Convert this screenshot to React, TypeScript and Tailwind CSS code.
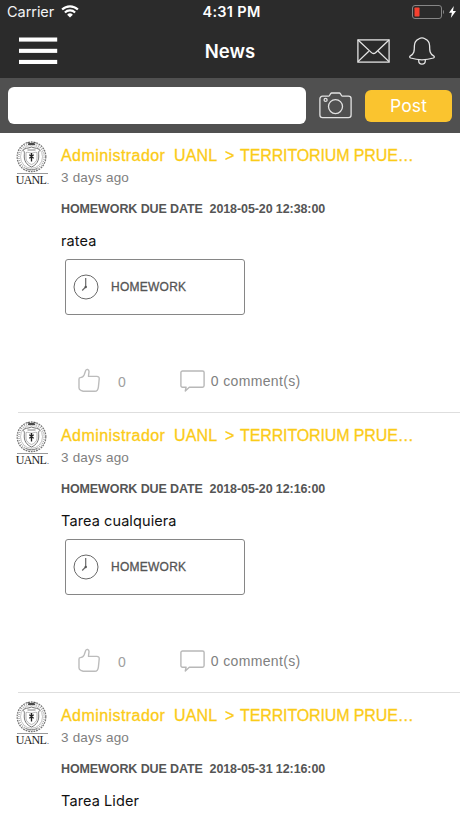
const posts = [
  { id: 1, due: '2018-05-20 12:38:00', body: 'ratea', hasTask: true },
  { id: 2, due: '2018-05-20 12:16:00', body: 'Tarea cualquiera', hasTask: true },
  { id: 3, due: '2018-05-31 12:16:00', body: 'Tarea Lider', hasTask: false },
];

function StatusBar() {
  return (
    <div className="flex h-[23px] items-center pl-[7px] pr-1 font-['Inter',sans-serif] text-white">
      <div className="flex flex-1 items-center gap-[7px]">
        <span className="text-[14.5px] tracking-[-0.05px] text-gray-100">Carrier</span>
        <svg width="18" height="13" viewBox="0 0 18 13" fill="none" stroke="#fff" strokeWidth="2.1">
          <path d="M1.1 4.6a11.2 11.2 0 0 1 15.8 0" />
          <path d="M3.9 7.5a7.2 7.2 0 0 1 10.2 0" />
          <path d="M9 12.6 6.1 9.7a4.1 4.1 0 0 1 5.8 0Z" fill="#fff" stroke="none" />
        </svg>
      </div>
      <span className="text-[14.5px] font-semibold tracking-[0.3px]">4:31 PM</span>
      <div className="flex flex-1 items-center justify-end gap-[4px]">
        <svg width="33" height="14" viewBox="0 0 33 14">
          <rect x="0.5" y="0.5" width="29" height="13" rx="2.5" fill="none" stroke="#868686" />
          <rect x="2.5" y="2.5" width="5" height="9" rx="0.8" fill="#f6402f" />
          <path d="M31 5c1.3.4 1.3 3.6 0 4Z" fill="#868686" />
        </svg>
        <svg width="7" height="12" viewBox="0 0 7 12" fill="#fff">
          <path d="M4.8 0 0 6.8h2.9L1.8 12 7 4.9H4Z" />
        </svg>
      </div>
    </div>
  );
}

function NavBar() {
  return (
    <div className="flex h-[55px] items-center justify-between pl-[19px] pr-[25px]">
      <svg width="77" height="28" viewBox="0 0 77 28" fill="#fff">
        <rect x="0" y="0.5" width="38.2" height="4.1" />
        <rect x="0" y="11.8" width="38.2" height="4.1" />
        <rect x="0" y="22.9" width="38.2" height="4.1" />
      </svg>
      <h1 className="pl-[7px] pt-[3px] font-['Inter',sans-serif] text-[18.5px] font-semibold text-white">News</h1>
      <div className="flex items-center gap-[19px]">
        <svg width="33" height="24" viewBox="0 0 33 24" fill="none" stroke="#e4e4e4" strokeWidth="1.3">
          <rect x="0.9" y="0.9" width="31.2" height="22.2" />
          <path d="m1 1 13.2 12.4c1.4 1.3 3.2 1.3 4.6 0L32 1M1 22.6l10.8-10.4M32 22.6 21.2 12.2" />
        </svg>
        <svg className="mt-px" width="26" height="28" viewBox="0 0 26 28" fill="none" stroke="#e4e4e4" strokeWidth="1.3" strokeLinejoin="round">
          <path d="M10 1.8c1.5-.9 4.5-.9 6 0 3 1.3 4.6 3.6 4.6 7 0 5.3.2 8 4 10 1 .6.9 1.7-.2 2.2-7 2.2-15.8 2.2-22.8 0-1.1-.5-1.2-1.6-.2-2.2 3.8-2 4-4.7 4-10 0-3.400 1.600-5.700 4.600-7Z" />
          <path d="M9.7 22.7v1.1a3.3 3.3 0 0 0 6.6 0v-1.1" />
        </svg>
      </div>
    </div>
  );
}

function Composer() {
  return (
    <div className="flex h-[55px] items-center bg-[#505050] pl-2">
      <input className="h-[37px] w-[298px] rounded-[6px] bg-white outline-none" />
      <svg className="-mt-px ml-[12.5px]" width="33" height="27" viewBox="0 0 33 27" fill="none" stroke="#e2e2e2" strokeWidth="1.3">
        <path d="M3.5 4.2h6.3c1.3 0 1-2.8 2.700-3.200h8c1.700.4 1.400 3.200 2.700 3.200h6.300a2.600 2.600 0 0 1 2.600 2.600v16.300a2.600 2.600 0 0 1-2.600 2.600h-26A2.600 2.600 0 0 1 .9 23.100V6.800a2.600 2.600 0 0 1 2.600-2.600Z" />
        <circle cx="16.5" cy="14.6" r="7" />
        <circle cx="6.6" cy="7.9" r="1.5" />
      </svg>
      <button className="ml-[13.5px] h-8 w-[87px] rounded-[6px] bg-[#fac42f] pt-px font-['Inter',sans-serif] text-[17.5px] tracking-[0.1px] text-white">
        Post
      </button>
    </div>
  );
}

function Crest() {
  return (
    <div className="flex w-8 flex-col items-center">
      <svg width="31" height="33" viewBox="0 0 31 33" fill="none" stroke="#4a4a4a">
        <ellipse cx="15.5" cy="16.8" rx="14.3" ry="14.8" stroke="#777" strokeWidth="1.3" strokeDasharray="1.8 0.9" />
        <ellipse cx="15.5" cy="16.8" rx="12.6" ry="13" stroke="#999" strokeWidth="1.6" strokeDasharray="0.8 1.3" />
        <ellipse cx="15.5" cy="16.8" rx="11" ry="11.5" stroke="#aaa" strokeWidth="0.7" />
        <path d="M11.5 2.6c2.5 1.400 5.500 1.400 8 0M12 4.500h7" strokeWidth="1.200" />
        <path d="M7.200 10.300c1-2.500 5-1.700 8.300-3.300 3.300 1.600 7.300.8 8.300 3.300-1.300 1-1.300 2.700-1.100 4.500.5 6-2.200 10-7.200 12.200-5-2.200-7.700-6.200-7.200-12.200.2-1.800.2-3.500-1.100-4.500Z" stroke="#666" strokeWidth="0.900" />
        <path d="M10 12.500c2-.7 3.500.6 5.500.6s3.500-1.300 5.500-.6v5.700c0 3-2.300 5-5.500 6.400-3.200-1.400-5.500-3.400-5.500-6.400Z" stroke="#999" strokeWidth="0.700" />
        <path d="M15.500 13v8.500M13.300 14.700l2.200 1.600 2.200-1.600M13.300 18.200l2.200-1.400 2.200 1.400" stroke="#222" strokeWidth="1.300" />
        <path d="M11.500 10h8M9.500 28.300c3.600 2 8.400 2 12 0" stroke="#777" strokeWidth="0.900" />
      </svg>
      <div className="ml-[2px] flex h-[13px] w-[31px] justify-center border-t border-[#999] font-['Liberation_Serif',serif] text-[12px] leading-[12px] tracking-[-0.8px] text-[#222]">
        UANL<span className="pl-px pt-[2px] text-[8px]">.</span>
      </div>
    </div>
  );
}

function TaskCard() {
  return (
    <>
      <div className="ml-[4px] mt-[8px] flex h-[56px] w-[180px] items-center rounded-[3px] border border-[#868686] pl-[7px]">
        <svg width="26" height="26" viewBox="0 0 26 26" fill="none" stroke="#686868" strokeWidth="1">
          <circle cx="13" cy="13" r="12" />
          <path d="M12.7 4v9l-3.5 3.5" strokeWidth="1.2" />
          <circle cx="12.7" cy="13" r="1.2" fill="#555" stroke="none" />
        </svg>
        <span className="ml-[12px] text-[12px] tracking-[0.25px] text-[#555] [-webkit-text-stroke:0.3px_#555]">HOMEWORK</span>
      </div>
      <div className="mt-[52px] flex h-[27px] items-center pl-[16px] text-[14px] text-[#808080]">
        <svg width="24" height="25" viewBox="0 0 24 25" fill="none" stroke="#bcbcbc" strokeWidth="1.4" strokeLinejoin="round">
          <path d="M3.2 9.6c2.300 0 3.100-.6 3.900-2.600l1.600-4.500C9.400.8 12 1.100 12 3.500c0 1.700-.5 3.200-.5 4.900h8.300c1.900 0 2.600 1 2.400 2.600l-.8 8c-.3 2.800-1.200 4.300-3.500 4.300H6.200c-1 0-1.500-.6-2.300-1-1.300-.5-1.900-.9-1.900-2.200v-8.900c0-1 .3-1.600 1.200-1.600Z" />
        </svg>
        <span className="ml-[17px] pt-[3px] text-[#a0a0a0]">0</span>
        <svg className="ml-[54px] mt-px" width="25" height="22" viewBox="0 0 25 22" fill="none" stroke="#b8b8b8" strokeWidth="1.4" strokeLinejoin="round">
          <path d="M2.5 1h20a1.6 1.6 0 0 1 1.6 1.6v13a1.6 1.6 0 0 1-1.6 1.6H9.3L5.300 21l.8-3.800H2.500A1.600 1.600 0 0 1 .9 15.600v-13A1.600 1.600 0 0 1 2.500 1Z" />
        </svg>
        <span className="ml-[6px] pt-px tracking-[0.35px]">0 comment(s)</span>
      </div>
    </>
  );
}

function Post({ due, body, hasTask }: { due: string; body: string; hasTask: boolean }) {
  return (
    <article className="h-[280px]">
      <div className="flex h-[279px] pl-[15px] pt-[7px] font-['Liberation_Sans',Arial,sans-serif]">
        <Crest />
        <div className="ml-[14px] flex-1 whitespace-pre pt-[6px]">
          <h2 className="flex h-[23px] text-[16px] leading-5 text-[#fbcb17] [-webkit-text-stroke:0.3px_#fbcb17]">
            <span className="w-[113px] tracking-[0.43px]">Administrador</span>
            <span className="w-[51px] tracking-[0.15px]">UANL</span>
            <span className="w-[15px]">&gt;</span>
            <span className="tracking-[-0.12px]">TERRITORIUM PRUE…</span>
          </h2>
          <p className="text-[13.5px] leading-[18px] tracking-[0.2px] text-[#808080]">3 days ago</p>
          <p className="mt-[13px] text-[12.5px] font-bold leading-[18px] tracking-[-0.1px] text-[#555]">
            {'HOMEWORK DUE DATE  ' + due}
          </p>
          <p className="mt-[13px] font-['Inter',sans-serif] text-[14.5px] leading-5 tracking-[0.1px] text-[#111]">{body}</p>
          {hasTask && <TaskCard />}
        </div>
      </div>
      <div className="ml-[18px] h-px bg-[#dedede]" />
    </article>
  );
}

export default function App() {
  return (
    <div className="h-[818px] w-[460px] overflow-hidden bg-white">
      <header className="bg-[#2b2b2b]">
        <StatusBar />
        <NavBar />
        <Composer />
      </header>
      <main>
        {posts.map((post) => (
          <Post key={post.id} due={post.due} body={post.body} hasTask={post.hasTask} />
        ))}
      </main>
    </div>
  );
}
